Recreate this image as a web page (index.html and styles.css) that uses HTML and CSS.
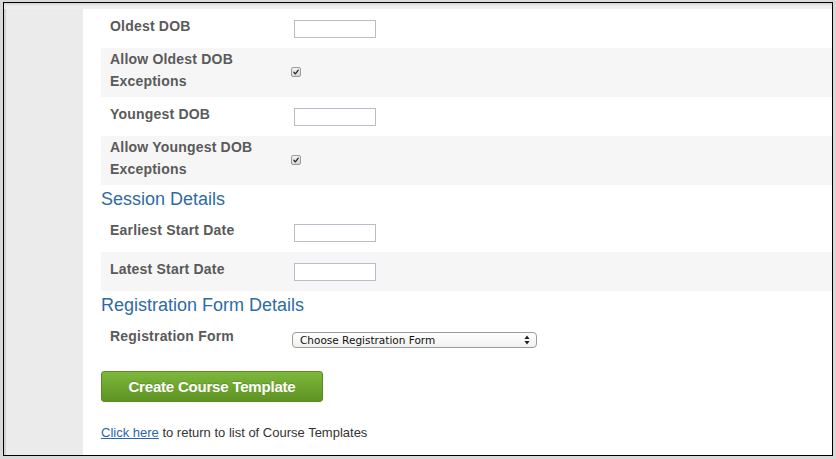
FILE: index.html
```html
<!DOCTYPE html>
<html>
<head>
<meta charset="utf-8">
<link rel="stylesheet" href="styles.css">
</head>
<body>
<div class="frame">
  <div class="topband"></div>
  <div class="main">
    <div class="sidebar"></div>
    <div class="content">
      <div class="row">
        <div class="label">Oldest DOB</div>
        <div class="field"><input class="text" type="text"></div>
      </div>
      <div class="row alt">
        <div class="label">Allow Oldest DOB<br>Exceptions</div>
        <div class="field"><span class="check"><svg viewBox="0 0 10 10" width="10" height="10"><path d="M2.3 5.2 L4.2 7.3 L7.8 2.6" fill="none" stroke="#222" stroke-width="1.6" stroke-linecap="round" stroke-linejoin="round"/></svg></span></div>
      </div>
      <div class="row">
        <div class="label">Youngest DOB</div>
        <div class="field"><input class="text" type="text"></div>
      </div>
      <div class="row alt">
        <div class="label">Allow Youngest DOB<br>Exceptions</div>
        <div class="field"><span class="check"><svg viewBox="0 0 10 10" width="10" height="10"><path d="M2.3 5.2 L4.2 7.3 L7.8 2.6" fill="none" stroke="#222" stroke-width="1.6" stroke-linecap="round" stroke-linejoin="round"/></svg></span></div>
      </div>
      <h2 class="section">Session Details</h2>
      <div class="row">
        <div class="label">Earliest Start Date</div>
        <div class="field"><input class="text" type="text"></div>
      </div>
      <div class="row alt">
        <div class="label">Latest Start Date</div>
        <div class="field"><input class="text" type="text"></div>
      </div>
      <h2 class="section">Registration Form Details</h2>
      <div class="row">
        <div class="label">Registration Form</div>
        <div class="field"><div class="select"><span>Choose Registration Form</span><span class="arrows"><svg viewBox="0 0 6 10" width="6" height="10"><path d="M3 0.5 L5.6 4 L0.4 4 Z M3 9.5 L5.6 6 L0.4 6 Z" fill="#222"/></svg></span></div></div>
      </div>
      <div class="actions">
        <button class="btn" type="button">Create Course Template</button>
      </div>
      <p class="back"><a href="#">Click here</a> to return to list of Course Templates</p>
    </div>
  </div>
</div>
</body>
</html>
```

FILE: styles.css
```css
* { box-sizing: border-box; }
html, body { margin: 0; padding: 0; }
body {
  background: #d9d9d9;
  width: 836px;
  height: 459px;
  overflow: hidden;
  font-family: "Liberation Sans", Arial, sans-serif;
}
.frame {
  margin: 2px 0 0 3px;
  width: 830px;
  height: 454px;
  border: 1px solid #000;
  background: #fff;
  display: flex;
  flex-direction: column;
  overflow: hidden;
}
.topband {
  height: 6px;
  flex: none;
  background: linear-gradient(#cfcfcf, #e9e9e9 40%, #efefef);
}
.main {
  flex: 1;
  display: flex;
}
.sidebar {
  width: 79px;
  flex: none;
  background: #ebebeb;
  border-left: 2px solid #d2d2d2;
}
.content {
  flex: 1;
  padding-left: 18px;
  background: #fff;
}
.row {
  display: flex;
  align-items: center;
  min-height: 39px;
}
.row.alt { background: #f6f6f6; }
.label {
  width: 190px;
  flex: none;
  padding-left: 9px;
  padding-bottom: 5px;
  font-weight: bold;
  font-size: 14px;
  line-height: 22px;
  letter-spacing: 0.2px;
  color: #5a5a5a;
}
.field {
  display: flex;
  align-items: center;
}
.text {
  margin: 0 0 0 3px;
  width: 82px;
  height: 18px;
  border: 1px solid #bdbbc9;
  background: #fff;
  padding: 0;
}
.check {
  display: inline-flex;
  width: 10px;
  height: 10px;
  border: 1px solid #9a9a9a;
  border-radius: 2px;
  background: linear-gradient(#f2f2f2, #d6d6d6);
  align-items: center;
  justify-content: center;
  margin-top: -1px;
}
.check svg { display: block; width: 8px; height: 8px; }
.section {
  margin: 0;
  height: 28px;
  line-height: 28px;
  font-size: 18px;
  font-weight: normal;
  color: #2e6ba3;
}
.select {
  margin-left: 1px;
  margin-top: 3px;
  width: 245px;
  height: 16px;
  border: 1px solid #9b9b9b;
  border-radius: 4px;
  background: linear-gradient(#ffffff, #f1f1f1);
  display: flex;
  align-items: center;
  justify-content: space-between;
  padding: 0 6px 0 7px;
  font-family: "DejaVu Sans", "Liberation Sans", sans-serif;
  font-size: 10.5px;
  color: #111;
}
.arrows { display: flex; align-items: center; }
.actions {
  padding-top: 13px;
}
.btn {
  width: 222px;
  height: 31px;
  border: 1px solid #5a8c22;
  border-radius: 3px;
  background: linear-gradient(#7db83c, #5e9323);
  color: #fff;
  font-family: "Liberation Sans", Arial, sans-serif;
  font-weight: bold;
  font-size: 15px;
  letter-spacing: -0.2px;
  padding: 0;
  text-shadow: 0 -1px 0 rgba(0,0,0,0.15);
}
.back {
  margin: 22px 0 0 0;
  font-size: 13px;
  line-height: 18px;
  color: #333;
}
.back a { color: #2a66ad; }
```
